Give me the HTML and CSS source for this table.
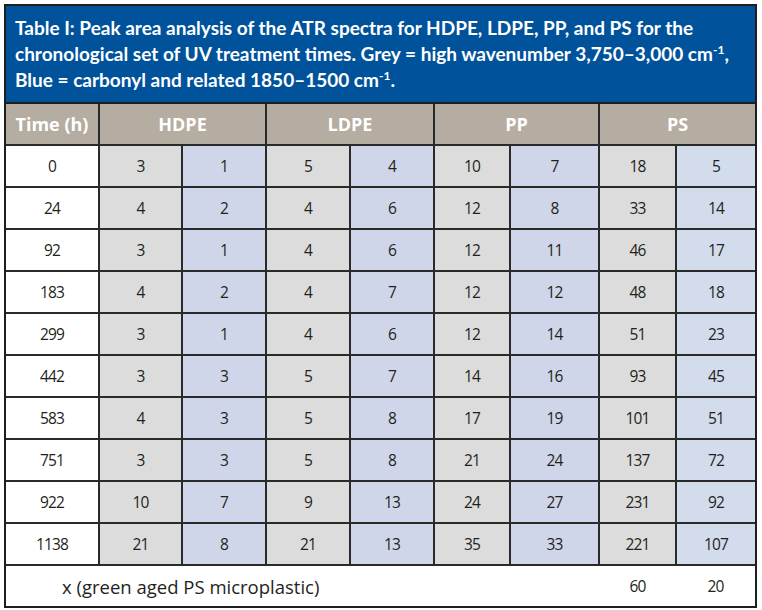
FILE: index.html
```html
<!DOCTYPE html>
<html lang="en">
<head>
<meta charset="utf-8">
<title>Table I</title>
<link rel="stylesheet" href="styles.css">
</head>
<body>
<div class="frame">
  <div class="title">Table I: Peak area analysis of the ATR spectra for HDPE, LDPE, PP, and PS for the<br>chronological set of UV treatment times. Grey = high wavenumber 3,750&ndash;3,000 cm<sup>-1</sup>,<br>Blue = carbonyl and related 1850&ndash;1500 cm<sup>-1</sup>.</div>
  <table class="data">
    <colgroup>
      <col class="c-time"><col class="c1"><col class="c2"><col class="c3"><col class="c4"><col class="c5"><col class="c6"><col class="c7"><col class="c8">
    </colgroup>
    <thead>
      <tr><th>Time (h)</th><th colspan="2">HDPE</th><th colspan="2">LDPE</th><th colspan="2">PP</th><th colspan="2">PS</th></tr>
    </thead>
    <tbody>
      <tr><td class="t">0</td><td class="g">3</td><td class="b">1</td><td class="g">5</td><td class="b">4</td><td class="g">10</td><td class="b">7</td><td class="g">18</td><td class="b2">5</td></tr>
      <tr><td class="t">24</td><td class="g">4</td><td class="b">2</td><td class="g">4</td><td class="b">6</td><td class="g">12</td><td class="b">8</td><td class="g">33</td><td class="b2">14</td></tr>
      <tr><td class="t">92</td><td class="g">3</td><td class="b">1</td><td class="g">4</td><td class="b">6</td><td class="g">12</td><td class="b">11</td><td class="g">46</td><td class="b2">17</td></tr>
      <tr><td class="t">183</td><td class="g">4</td><td class="b">2</td><td class="g">4</td><td class="b">7</td><td class="g">12</td><td class="b">12</td><td class="g">48</td><td class="b2">18</td></tr>
      <tr><td class="t">299</td><td class="g">3</td><td class="b">1</td><td class="g">4</td><td class="b">6</td><td class="g">12</td><td class="b">14</td><td class="g">51</td><td class="b2">23</td></tr>
      <tr><td class="t">442</td><td class="g">3</td><td class="b">3</td><td class="g">5</td><td class="b">7</td><td class="g">14</td><td class="b">16</td><td class="g">93</td><td class="b2">45</td></tr>
      <tr><td class="t">583</td><td class="g">4</td><td class="b">3</td><td class="g">5</td><td class="b">8</td><td class="g">17</td><td class="b">19</td><td class="g">101</td><td class="b2">51</td></tr>
      <tr><td class="t">751</td><td class="g">3</td><td class="b">3</td><td class="g">5</td><td class="b">8</td><td class="g">21</td><td class="b">24</td><td class="g">137</td><td class="b2">72</td></tr>
      <tr><td class="t">922</td><td class="g">10</td><td class="b">7</td><td class="g">9</td><td class="b">13</td><td class="g">24</td><td class="b">27</td><td class="g">231</td><td class="b2">92</td></tr>
      <tr><td class="t">1138</td><td class="g">21</td><td class="b">8</td><td class="g">21</td><td class="b">13</td><td class="g">35</td><td class="b">33</td><td class="g">221</td><td class="b2">107</td></tr>
      <tr class="foot"><td class="note" colspan="7">x (green aged PS microplastic)</td><td>60</td><td>20</td></tr>
    </tbody>
  </table>
</div>
</body>
</html>
```

FILE: styles.css
```css
html, body {
  margin: 0;
  padding: 0;
  background: #ffffff;
}

.frame {
  margin: 4px 0 0 4px;
  width: 749px;
  border: 2px solid #1e1e1e;
  background: #ffffff;
}

.title {
  background: #00529b;
  color: #ffffff;
  font-family: Lato, "Open Sans", sans-serif;
  font-weight: bold;
  font-size: 19px;
  line-height: 26px;
  padding: 9px 8px 9px 9px;
  border-bottom: 2px solid #1e1e1e;
  white-space: nowrap;
}

.title sup {
  font-size: 12px;
  line-height: 0;
  vertical-align: 7px;
}

.data {
  width: 749px;
  border-collapse: collapse;
  border-style: hidden;
  table-layout: fixed;
  font-family: "Open Sans", "Noto Sans", sans-serif;
  font-size: 15.5px;
  letter-spacing: -0.9px;
  color: #231f20;
}

.c-time { width: 93px; }
.c1 { width: 83px; }
.c2 { width: 84px; }
.c3 { width: 84px; }
.c4 { width: 84px; }
.c5 { width: 76px; }
.c6 { width: 89px; }
.c7 { width: 77px; }
.c8 { width: 79px; }

.data th,
.data td {
  border: 2px solid #2a2a2a;
  text-align: center;
  vertical-align: middle;
  padding: 0;
  height: 40px;
}

.data th {
  background: #b5ada1;
  color: #ffffff;
  font-weight: bold;
  font-size: 18px;
  letter-spacing: 0;
}

.data td.t { background: #ffffff; }
.data td.g { background: #dcdcdc; }
.data td.b { background: #d0d6e9; }
.data td.b2 { background: #d3dcec; }

.foot td {
  border-left-style: none;
  border-right-style: none;
  background: #ffffff;
}

.foot td.note {
  text-align: left;
  padding-left: 56px;
  font-size: 18.5px;
  letter-spacing: 0;
}
```
